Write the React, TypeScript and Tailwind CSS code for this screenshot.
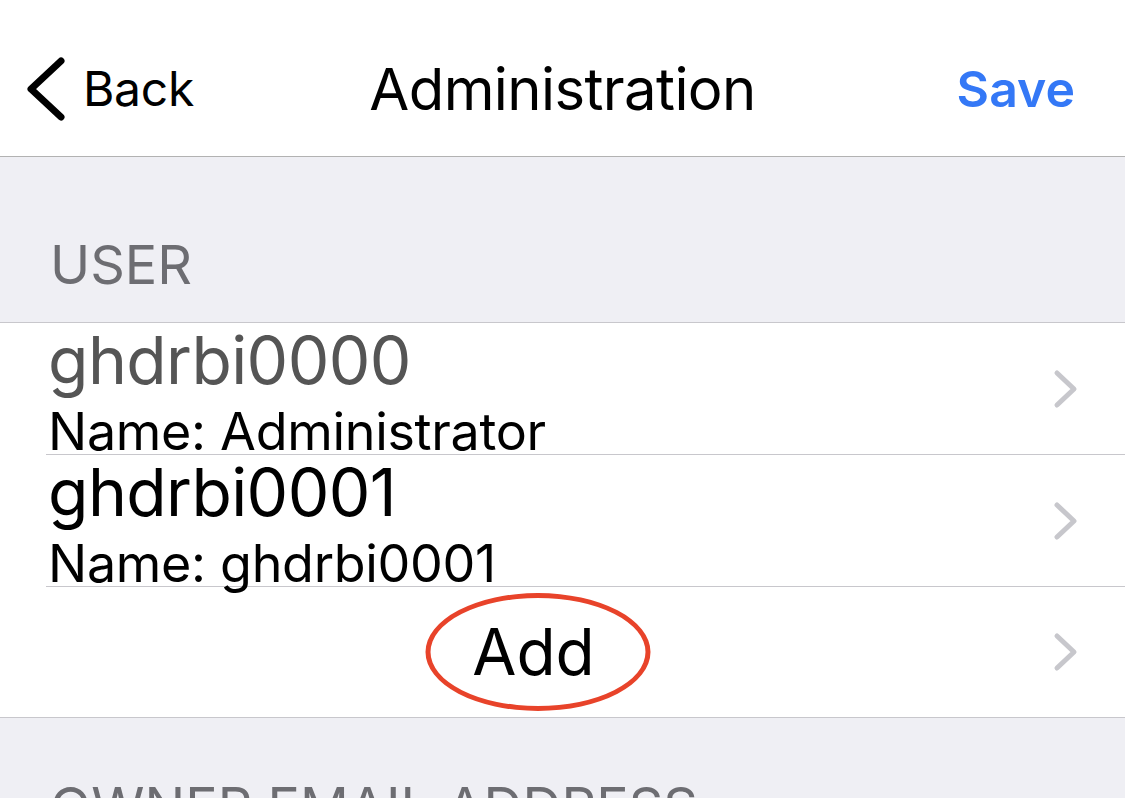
import React from 'react';

const font = { fontFamily: 'Inter, "Noto Sans", "Liberation Sans", sans-serif' };

function Chevron() {
  return (
    <svg width="26" height="40" viewBox="0 0 26 40" className="shrink-0">
      <path d="M4 4 L21 20 L4 36" fill="none" stroke="#c7c7cc" strokeWidth="5" strokeLinecap="round" strokeLinejoin="round" />
    </svg>
  );
}

function UserRow({ id, name, dim }: { id: string; name: string; dim?: boolean }) {
  return (
    <div className="flex h-[131px] items-center pl-[48px] pr-[46px]">
      <div className="flex h-full flex-1 flex-col justify-end">
        <div className={`pb-[17px] text-[66px] leading-[66px] tracking-[-0.6px] ${dim ? 'text-[#555555]' : 'text-black'}`}>{id}</div>
        <div className="text-[52px] leading-[44px] tracking-[-0.3px] text-black">{name}</div>
      </div>
      <Chevron />
    </div>
  );
}

export default function App() {
  return (
    <div className="h-[798px] w-[1125px] overflow-hidden bg-[#efeff4]" style={font}>
      {/* Nav bar */}
      <div className="grid h-[157px] grid-cols-[1fr_auto_1fr] items-center border-b border-[#b2b2b2] bg-white pt-[22px]">
        <div className="flex items-center pl-[25px]">
          <svg width="40" height="64" viewBox="0 0 40 64">
            <path d="M36 4 L6 32 L36 60" fill="none" stroke="black" strokeWidth="7" strokeLinecap="round" strokeLinejoin="round" />
          </svg>
          <span className="ml-[18px] text-[48px] tracking-[-0.3px] text-black">Back</span>
        </div>
        <div className="text-center text-[58px] tracking-[-0.6px] text-black">Administration</div>
        <div className="flex justify-end pr-[50px]">
          <span className="text-[50px] font-semibold text-[#3478f6]">Save</span>
        </div>
      </div>

      {/* USER header */}
      <div className="flex h-[165px] items-end pb-[30px] pl-[50px] text-[54px] leading-none text-[#6d6d72]">USER</div>

      {/* List */}
      <div className="border-y border-[#c8c7cc] bg-white">
        <UserRow id="ghdrbi0000" name="Name: Administrator" dim />
        <div className="ml-[46px] h-px bg-[#c8c7cc]" />
        <UserRow id="ghdrbi0001" name="Name: ghdrbi0001" />
        <div className="ml-[46px] h-px bg-[#c8c7cc]" />
        <div className="flex h-[130px] items-center pr-[46px]">
          <div className="flex flex-1 justify-center pl-[14px]">
            <span className="relative text-[64px] text-black">
              Add
              <span className="absolute left-[calc(50%+4px)] top-1/2 h-[118px] w-[225px] -translate-x-1/2 -translate-y-1/2 rounded-[50%] border-[5px] border-[#e8432a]" />
            </span>
          </div>
          <Chevron />
        </div>
      </div>

      {/* OWNER EMAIL header */}
      <div className="flex h-[90px] items-start pl-[50px] pt-[62px] text-[54px] leading-none whitespace-nowrap text-[#6d6d72]">OWNER EMAIL ADDRESS</div>
    </div>
  );
}
